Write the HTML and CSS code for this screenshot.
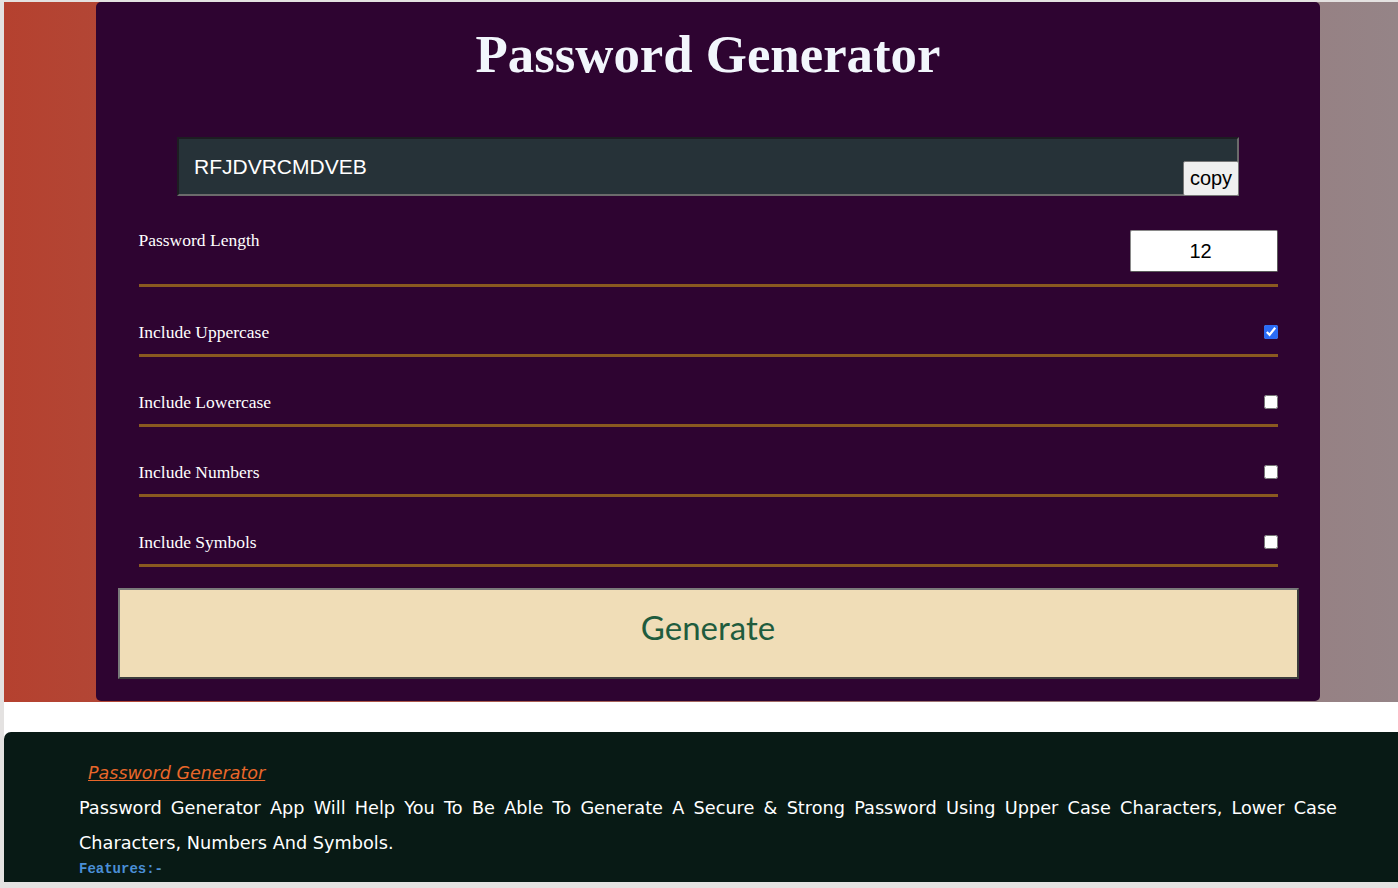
FILE: index.html
```html
<!DOCTYPE html>
<html>
<head>
<meta charset="utf-8">
<link rel="stylesheet" href="styles.css">
</head>
<body>
<div class="hero">
  <div class="card">
    <h1 class="title">Password Generator</h1>
    <div class="result">
      <span class="result-text">RFJDVRCMDVEB</span>
      <button class="copy">copy</button>
    </div>
    <div class="settings">
      <div class="row row-first">
        <label class="label">Password Length</label>
        <input class="length" type="number" value="12">
      </div>
      <div class="row">
        <label class="label">Include Uppercase</label>
        <input class="check" type="checkbox" checked>
      </div>
      <div class="row">
        <label class="label">Include Lowercase</label>
        <input class="check" type="checkbox">
      </div>
      <div class="row">
        <label class="label">Include Numbers</label>
        <input class="check" type="checkbox">
      </div>
      <div class="row">
        <label class="label">Include Symbols</label>
        <input class="check" type="checkbox">
      </div>
    </div>
    <button class="generate">Generate</button>
  </div>
</div>
<div class="info">
  <a class="info-link" href="#">Password Generator</a>
  <p class="info-text">Password Generator App Will Help You To Be Able To Generate A Secure &amp; Strong Password Using Upper Case Characters, Lower Case Characters, Numbers And Symbols.</p>
  <div class="features">Features:-</div>
</div>
<div class="frame-bottom"></div>
</body>
</html>
```
FILE: styles.css
```css
html {
  background: #e4e2e1;
}
body {
  margin: 2px 0 0 4px;
  background: #ffffff;
  overflow: hidden;
  height: 886px;
}
.hero {
  height: 700px;
  background: linear-gradient(90deg, #b5412f 0%, #a95a4e 35%, #9a787a 75%, #958487 100%);
  display: flex;
}
.card {
  margin-left: 92px;
  width: 1224px;
  height: 699px;
  background: #2e0431;
  border-radius: 5px;
  display: flex;
  flex-direction: column;
  align-items: center;
}
.title {
  margin: 21px 0 0;
  font-family: "Liberation Serif", serif;
  font-weight: bold;
  font-size: 52.8px;
  line-height: 62px;
  color: #f2f6fc;
}
.result {
  position: relative;
  margin-top: 52px;
  width: 1058px;
  height: 55px;
  background: #263238;
  border: 2px solid;
  border-color: #1d1d22 #6b6b6b #6b6b6b #1d1d22;
  display: flex;
  align-items: center;
}
.result-text {
  margin-left: 15px;
  font-family: "Liberation Sans", Arial, sans-serif;
  font-size: 21px;
  color: #ffffff;
  padding-top: 1px;
}
.copy {
  position: absolute;
  right: -2px;
  bottom: -2px;
  width: 56px;
  height: 35px;
  padding: 0;
  margin: 0;
  background: #efefef;
  border: 1px solid #767676;
  border-radius: 2px;
  font-family: "Liberation Sans", Arial, sans-serif;
  font-size: 20px;
  color: #000;
}
.settings {
  margin-top: 34px;
  width: 1139px;
}
.row {
  display: flex;
  justify-content: space-between;
  align-items: center;
  padding: 36px 0 13px;
  border-bottom: 3px solid #8a5a20;
}
.row-first {
  align-items: flex-start;
  padding: 0 0 12px;
}
.label {
  font-family: "Liberation Serif", serif;
  font-size: 17.5px;
  line-height: 18px;
  color: #ffffff;
}
.row-first .label {
  margin-top: 1px;
}
.length {
  box-sizing: border-box;
  width: 148px;
  height: 42px;
  margin: 0;
  border: 1px solid;
  border-color: #8a8a8a #5a5a5a #5a5a5a #8a8a8a;
  border-radius: 2px;
  background: #fff;
  text-align: center;
  font-family: "Liberation Sans", Arial, sans-serif;
  font-size: 20px;
  color: #000;
  padding: 0 6px 0 0;
  -moz-appearance: textfield;
}
.length::-webkit-inner-spin-button,
.length::-webkit-outer-spin-button {
  -webkit-appearance: none;
  margin: 0;
}
.check {
  width: 14px;
  height: 14px;
  margin: 0;
  accent-color: #2a6cf5;
}
.generate {
  margin-top: 21px;
  width: 1181px;
  height: 91px;
  background: #f0ddb7;
  border: 2px solid;
  border-color: #7a7a7a #3c3c3c #3c3c3c #7a7a7a;
  font-family: "Lato", "Open Sans", sans-serif;
  font-size: 33px;
  color: #1f5c3e;
  padding: 0 0 14px;
}
.info {
  margin-top: 30px;
  background: #081a15;
  border-radius: 7px 0 0 0;
  padding: 31px 61px 20px 75px;
  height: 300px;
}
.info-link {
  display: inline-block;
  margin-left: 9px;
  font-family: "DejaVu Sans", Verdana, sans-serif;
  font-style: italic;
  font-size: 17.5px;
  line-height: 20px;
  color: #e8672a;
  text-decoration: underline;
}
.info-text {
  margin: 8px 0 0;
  font-family: "DejaVu Sans", Verdana, sans-serif;
  font-size: 17.7px;
  line-height: 35px;
  color: #ffffff;
  text-align: justify;
}
.features {
  margin-top: -1px;
  font-family: "Liberation Mono", "Courier New", monospace;
  font-weight: bold;
  font-size: 14px;
  line-height: 18px;
  color: #4a8fd6;
}
.frame-bottom {
  position: fixed;
  left: 0;
  right: 0;
  bottom: 0;
  height: 6px;
  background: #e4e2e1;
}
```
